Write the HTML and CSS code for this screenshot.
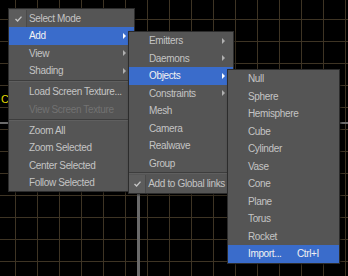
FILE: index.html
```html
<!DOCTYPE html>
<html lang="en">
<head>
    <meta charset="UTF-8">
    <title>Viewport Menu</title>
    <link rel="stylesheet" href="styles.css">
</head>
<body>
    <div class="screen">
        <div class="pane top">
            <span class="cam">C</span>
        </div>
        <div class="hsplit"></div>
        <div class="bottom">
            <div class="pane"></div>
            <div class="vsplit"></div>
            <div class="pane"></div>
        </div>

        <!-- main context menu -->
        <div class="menu main">
            <div class="item"><span class="check box"><svg width="7" height="6" viewBox="0 0 7 6"><path d="M0.5 3 L2.6 5 L6.5 0.6" fill="none" stroke="#c4c4c4" stroke-width="1.4"/></svg></span><span class="label">Select Mode</span></div>
            <div class="item on"><span class="check"></span><span class="label">Add</span><span class="arrow"></span></div>
            <div class="item"><span class="check"></span><span class="label">View</span><span class="arrow"></span></div>
            <div class="item"><span class="check"></span><span class="label">Shading</span><span class="arrow"></span></div>
            <div class="sep"></div>
            <div class="item"><span class="check"></span><span class="label">Load Screen Texture...</span></div>
            <div class="item off"><span class="check"></span><span class="label">View Screen Texture</span></div>
            <div class="sep"></div>
            <div class="item"><span class="check"></span><span class="label">Zoom All</span></div>
            <div class="item"><span class="check"></span><span class="label">Zoom Selected</span></div>
            <div class="item"><span class="check"></span><span class="label">Center Selected</span></div>
            <div class="item"><span class="check"></span><span class="label">Follow Selected</span></div>
        </div>

        <!-- Add submenu -->
        <div class="menu add">
            <div class="item"><span class="check"></span><span class="label">Emitters</span><span class="arrow"></span></div>
            <div class="item"><span class="check"></span><span class="label">Daemons</span><span class="arrow"></span></div>
            <div class="item on"><span class="check"></span><span class="label">Objects</span><span class="arrow"></span></div>
            <div class="item"><span class="check"></span><span class="label">Constraints</span><span class="arrow"></span></div>
            <div class="item"><span class="check"></span><span class="label">Mesh</span></div>
            <div class="item"><span class="check"></span><span class="label">Camera</span></div>
            <div class="item"><span class="check"></span><span class="label">Realwave</span></div>
            <div class="item"><span class="check"></span><span class="label">Group</span></div>
            <div class="sep thin"></div>
            <div class="item"><span class="check box"><svg width="7" height="6" viewBox="0 0 7 6"><path d="M0.5 3 L2.6 5 L6.5 0.6" fill="none" stroke="#c4c4c4" stroke-width="1.4"/></svg></span><span class="label">Add to Global links</span></div>
        </div>

        <!-- Objects submenu -->
        <div class="menu objects">
            <div class="item"><span class="check"></span><span class="label">Null</span></div>
            <div class="item"><span class="check"></span><span class="label">Sphere</span></div>
            <div class="item"><span class="check"></span><span class="label">Hemisphere</span></div>
            <div class="item"><span class="check"></span><span class="label">Cube</span></div>
            <div class="item"><span class="check"></span><span class="label">Cylinder</span></div>
            <div class="item"><span class="check"></span><span class="label">Vase</span></div>
            <div class="item"><span class="check"></span><span class="label">Cone</span></div>
            <div class="item"><span class="check"></span><span class="label">Plane</span></div>
            <div class="item"><span class="check"></span><span class="label">Torus</span></div>
            <div class="item"><span class="check"></span><span class="label">Rocket</span></div>
            <div class="item on"><span class="check"></span><span class="label">Import...</span><span class="key">Ctrl+I</span></div>
        </div>
    </div>
</body>
</html>
```

FILE: styles.css
```css
body {
    margin: 0;
    font-family: "Liberation Sans", Arial, sans-serif;
    font-size: 10px;
    background: #000;
}
.screen {
    position: relative;
    width: 348px;
    height: 276px;
    overflow: hidden;
    display: flex;
    flex-direction: column;
    background-color: #000;
    background-image:
        linear-gradient(to right, #3e3424 1px, transparent 1px),
        linear-gradient(to bottom, #3e3424 1px, transparent 1px);
    background-size: 22px 22px;
    background-position: 15px 19px;
}
.pane {
    flex: 1;
}
.pane.top {
    flex: none;
    height: 122px;
    display: flex;
    align-items: flex-end;
}
.cam {
    color: #e0d800;
    font-size: 11px;
    padding: 0 0 17px 1px;
}
.hsplit {
    height: 2px;
    background: #6a6a6a;
}
.bottom {
    flex: 1;
    display: flex;
}
.bottom .pane:first-child {
    flex: none;
    width: 137px;
}
.vsplit {
    width: 3px;
    background: #6a6a6a;
}

/* popup menus */
.menu {
    position: absolute;
    background: #555555;
    border: 1px solid #2c2c2c;
    box-shadow: 1px 1px 2px rgba(0, 0, 0, 0.6);
    color: #c4c4c4;
    letter-spacing: -0.35px;
}
.menu.main {
    left: 8px;
    top: 8px;
    width: 125px;
    padding-top: 1px;
}
.menu.add {
    left: 128px;
    top: 31px;
    width: 104px;
}
.menu.objects {
    left: 227px;
    top: 69px;
    width: 111px;
}
.item {
    display: flex;
    align-items: center;
    height: 17.3px;
    padding-right: 8px;
    white-space: nowrap;
}
.add .item, .objects .item {
    height: 17.5px;
}
.item.on {
    background: #3a6ccb;
    color: #f2f2f2;
}
.item.off {
    color: #727272;
}
.check {
    width: 18px;
    align-self: stretch;
    display: flex;
    align-items: center;
    justify-content: center;
}
.check.box {
    background: #5c5c5c;
    box-shadow: inset -1px 0 0 #4a4a4a;
}
.label {
    flex: 1;
    padding-left: 2px;
}
.key {
    margin-right: 12px;
}
.arrow {
    width: 0;
    height: 0;
    border-left: 3px solid #b0b0b0;
    border-top: 3px solid transparent;
    border-bottom: 3px solid transparent;
}
.item.on .arrow {
    border-left-color: #fff;
}
.sep {
    height: 1px;
    margin: 1px 0;
    background: #3d3d3d;
    border-bottom: 1px solid #5f5f5f;
}
.sep.thin {
    margin: 0 0 1px;
}
```
